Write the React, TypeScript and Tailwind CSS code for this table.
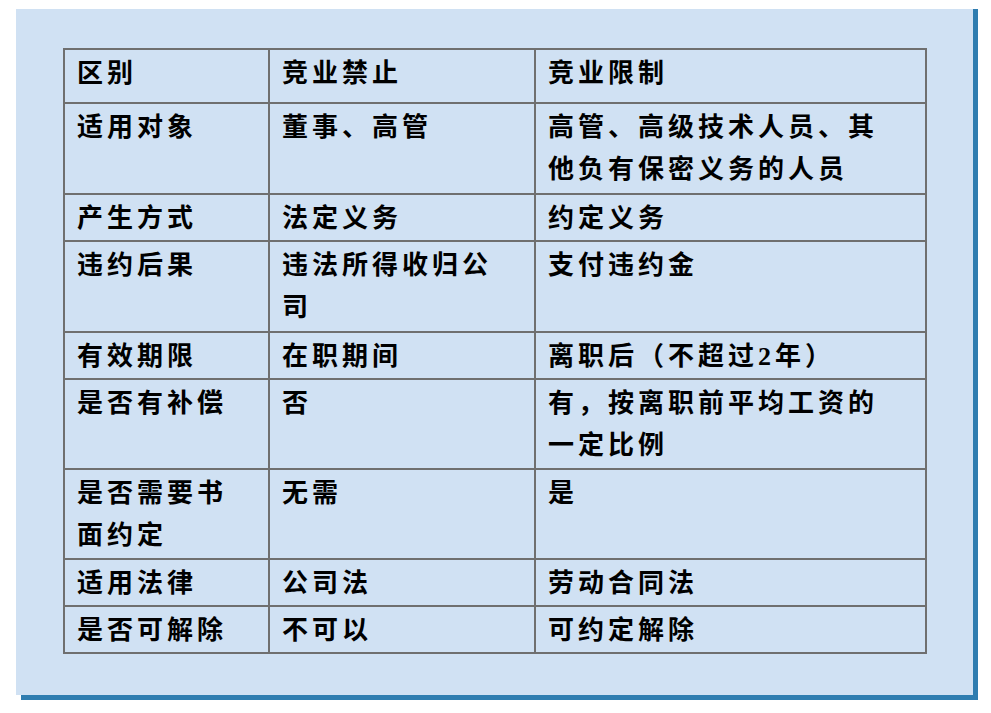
import React from "react";

const rows: { h: number; c: React.ReactNode[] }[] = [
  { h: 54, c: ["区别", "竞业禁止", "竞业限制"] },
  { h: 91, c: ["适用对象", "董事、高管", <>高管、高级技术人员、其<br />他负有保密义务的人员</>] },
  { h: 45, c: ["产生方式", "法定义务", "约定义务"] },
  { h: 91, c: ["违约后果", <>违法所得收归公<br />司</>, "支付违约金"] },
  { h: 45, c: ["有效期限", "在职期间", "离职后（不超过2年）"] },
  { h: 90, c: ["是否有补偿", "否", <>有，按离职前平均工资的<br />一定比例</>] },
  { h: 90, c: [<>是否需要书<br />面约定</>, "无需", "是"] },
  { h: 45, c: ["适用法律", "公司法", "劳动合同法"] },
  { h: 47, c: ["是否可解除", "不可以", "可约定解除"] },
];

export default function App() {
  return (
    <div className="w-[991px] h-[713px] bg-white pt-[9px] pl-[16px]">
      <div className="w-[957px] h-[686px] bg-[#d0e1f3] shadow-[5px_0_0_#2f7db0,5px_5px_0_#2f7db0] pt-[39px] pl-[47px]">
        <table
          className="border-collapse table-fixed w-[862px] text-black"
          style={{ fontFamily: '"Liberation Serif", "Noto Sans CJK SC", serif' }}
        >
          <colgroup>
            <col className="w-[205px]" />
            <col className="w-[266px]" />
            <col className="w-[391px]" />
          </colgroup>
          <tbody>
            {rows.map((r, i) => (
              <tr key={i} style={{ height: r.h }}>
                {r.c.map((c, j) => (
                  <td
                    key={j}
                    className="border-2 border-[#6f6f6f] align-top pl-[12px] pt-[3px] pr-0 text-[26px] leading-[42px] tracking-[4px] font-bold whitespace-nowrap"
                  >
                    {c}
                  </td>
                ))}
              </tr>
            ))}
          </tbody>
        </table>
      </div>
    </div>
  );
}
